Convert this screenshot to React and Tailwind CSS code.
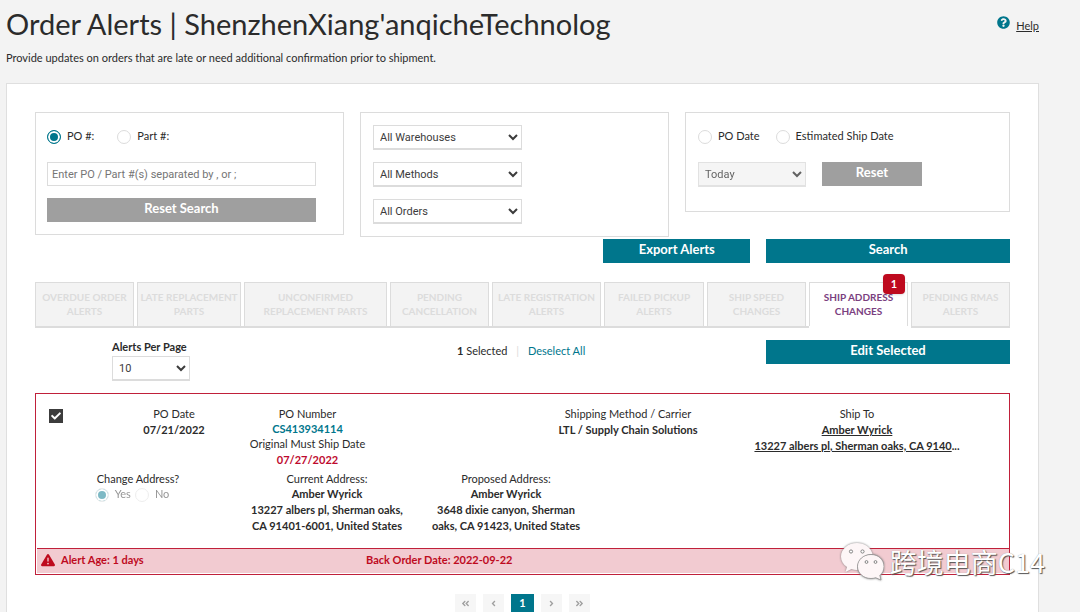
import { useState } from 'react';
import { FaAngleDoubleLeft, FaAngleDoubleRight, FaAngleLeft, FaAngleRight, FaCheck, FaQuestionCircle } from 'react-icons/fa';
import { FaTriangleExclamation } from 'react-icons/fa6';

const tabs = [
    { name: 'OVERDUE ORDER ALERTS' },
    { name: 'LATE REPLACEMENT PARTS' },
    { name: 'UNCONFIRMED REPLACEMENT PARTS' },
    { name: 'PENDING CANCELLATION' },
    { name: 'LATE REGISTRATION ALERTS' },
    { name: 'FAILED PICKUP ALERTS' },
    { name: 'SHIP SPEED CHANGES' },
    { name: 'SHIP ADDRESS CHANGES', count: 1 },
    { name: 'PENDING RMAS ALERTS' },
];

const Radio = ({ label, ...rest }) => (
    <label className="flex items-center gap-1.5">
        <input
            type="radio"
            className="size-[14px] shrink-0 appearance-none rounded-full border border-[#dcdcdc] bg-white checked:border-[#00768c] checked:bg-[#00768c] checked:shadow-[inset_0_0_0_2px_#fff] disabled:border-[#dcdcdc]!"
            {...rest}
        />
        <span className="pb-0.5">{label}</span>
    </label>
);

const Select = ({ options, className = '', ...rest }) => (
    <select
        className={`h-[25px] border border-b-2 border-[#dcdcdc] px-0.5 font-['Roboto',sans-serif] text-[11px] font-normal text-[#3c3c3c] ${className}`}
        {...rest}
    >
        {options.map((option) => <option key={option}>{option}</option>)}
    </select>
);

const Button = ({ children, gray, className = '' }) => (
    <button
        type="button"
        className={`h-6 pb-1 text-center text-[13px] font-bold text-white ${gray ? 'bg-[#9f9f9f]' : 'bg-[#00768c]'} ${className}`}
    >
        {children}
    </button>
);

const Filters = () => {
    const [searchBy, setSearchBy] = useState('po');
    return (
        <form className="grid grid-cols-[309fr_309fr_325fr] items-start gap-x-4">
            <div className="border border-[#dcdcdc] px-[11px] pt-[15px] pb-3">
                <div className="flex gap-[23px]">
                    <Radio name="searchBy" label="PO #:" checked={searchBy === 'po'} onChange={() => setSearchBy('po')} />
                    <Radio name="searchBy" label="Part #:" checked={searchBy === 'part'} onChange={() => setSearchBy('part')} />
                </div>
                <div className="mr-4 mt-4 flex flex-col">
                    <input
                        type="text"
                        aria-label="PO or part numbers"
                        placeholder="Enter PO / Part #(s) separated by , or ;"
                        className="h-6 border border-[#dcdcdc] px-1 font-['Roboto',sans-serif] text-[11px] placeholder:text-[#757575]"
                    />
                    <Button gray className="mt-3">Reset Search</Button>
                </div>
            </div>
            <div className="flex flex-col items-start gap-3 border border-[#dcdcdc] p-3">
                <Select className="w-[149px] bg-white" aria-label="Warehouse" options={['All Warehouses']} />
                <Select className="w-[149px] bg-white" aria-label="Method" options={['All Methods']} />
                <Select className="w-[149px] bg-white" aria-label="Orders" options={['All Orders']} />
            </div>
            <div className="border border-[#dcdcdc] px-3 pt-[15px] pb-6">
                <div className="flex gap-4">
                    <Radio name="dateBy" label="PO Date" />
                    <Radio name="dateBy" label="Estimated Ship Date" />
                </div>
                <div className="mt-4 flex items-start gap-4">
                    <Select className="w-[108px] bg-[#f3f3f3] opacity-80" aria-label="Date range" disabled options={['Today']} />
                    <Button gray className="w-[100px]">Reset</Button>
                </div>
            </div>
        </form>
    );
};

const Tabs = () => (
    <nav className="mt-[19px] grid grid-cols-[102fr_107fr_146fr_102fr_112fr_103fr_102fr_102fr_99fr] text-[10px] font-bold leading-[14px]">
        {tabs.map(({ name, count }) => (
            <div key={name} className={`flex pr-[3px] last:pr-0 ${count ? '' : 'shadow-[inset_0_-2px_#dcdcdc]'}`}>
                <button
                    type="button"
                    className={`relative mb-0.5 h-11 w-full border border-b-0 border-[#dcdcdc] pb-0.5 text-center ${count ? 'bg-white px-2 text-[#7b3f7f]' : 'bg-[#f3f3f3] px-0.5 text-[#dcdcdc]'}`}
                >
                    {name}
                    {count && (
                        <span className="absolute -top-[9px] right-0.5 flex h-5 w-[22px] items-center justify-center rounded-sm bg-[#be0a1e] text-[11px] text-white shadow">{count}</span>
                    )}
                </button>
            </div>
        ))}
    </nav>
);

const AlertCard = () => (
    <article className="mt-3 border border-[#c0203a] text-center">
        <div className="grid grid-cols-[minmax(0,71fr)_minmax(0,134fr)_minmax(0,133fr)_minmax(0,146fr)_minmax(0,216fr)_minmax(0,242fr)_minmax(0,31fr)] pt-3">
            <label className="relative ml-[13px] mt-[3px] flex size-[14px] items-center justify-center">
                <input type="checkbox" defaultChecked aria-label="Select order" className="peer size-[14px] appearance-none border border-[#3c3c3c] checked:bg-[#3c3c3c]" />
                <FaCheck className="pointer-events-none absolute size-[10px] text-white" />
            </label>
            <div>
                <p>PO Date</p>
                <p className="font-bold">07/21/2022</p>
            </div>
            <div>
                <p>PO Number</p>
                <p className="leading-[14px]"><a href="#" className="font-bold text-[#00768c]">CS413934114</a></p>
                <p className="whitespace-nowrap">Original Must Ship Date</p>
                <p className="font-bold text-[#be0a2e]">07/27/2022</p>
            </div>
            <div className="col-start-5">
                <p>Shipping Method / Carrier</p>
                <p className="font-bold">LTL / Supply Chain Solutions</p>
            </div>
            <div>
                <p>Ship To</p>
                <p className="font-bold"><a href="#" className="underline">Amber Wyrick</a></p>
                <p className="whitespace-nowrap font-bold"><a href="#" className="underline">13227 albers pl, Sherman oaks, CA 9140</a>...</p>
            </div>
        </div>
        <div className="mt-[3px] grid grid-cols-[204fr_174fr_184fr_411fr] pb-[14px]">
            <fieldset disabled>
                <legend className="mx-auto leading-[15px]">Change Address?</legend>
                <div className="flex justify-center gap-1 pr-3 opacity-50">
                    <Radio name="change" label="Yes" defaultChecked />
                    <Radio name="change" label="No" />
                </div>
            </fieldset>
            <div className="px-1">
                <p className="leading-[15px]">Current Address:</p>
                <p className="font-bold">Amber Wyrick</p>
                <p className="font-bold">13227 albers pl, Sherman oaks, CA 91401-6001, United States</p>
            </div>
            <div className="px-3">
                <p className="leading-[15px]">Proposed Address:</p>
                <p className="font-bold">Amber Wyrick</p>
                <p className="font-bold">3648 dixie canyon, Sherman oaks, CA 91423, United States</p>
            </div>
        </div>
        <footer className="mb-px ml-px grid grid-cols-[329fr_643fr] border-t border-[#c0203a] bg-[#f2cbd1] pt-[3px] pb-[5px] text-left font-bold text-[#be0a1e]">
            <p className="flex items-center gap-1.5 pl-1"><FaTriangleExclamation className="size-[14px]" /> Alert Age: 1 days</p>
            <p>Back Order Date: 2022-09-22</p>
        </footer>
    </article>
);

const PageButton = ({ label, icon: Icon }) => (
    <button type="button" aria-label={label} className="flex w-[21px] items-center justify-center bg-[#f6f6f6]">
        <Icon className="size-[9px]" />
    </button>
);

const Pagination = () => (
    <nav aria-label="Pages" className="mt-[19px] flex h-[18px] justify-center gap-[7px] text-[#a0a0a0]">
        <PageButton label="First" icon={FaAngleDoubleLeft} />
        <PageButton label="Previous" icon={FaAngleLeft} />
        <button type="button" className="w-[23px] bg-[#00768c] font-bold text-white">1</button>
        <PageButton label="Next" icon={FaAngleRight} />
        <PageButton label="Last" icon={FaAngleDoubleRight} />
    </nav>
);

const Watermark = () => (
    <div className="pointer-events-none absolute right-[35px] top-[542px] flex items-center gap-1.5 text-white">
        <svg viewBox="0 0 44 39" className="h-[39px] w-11 drop-shadow-[0_0_1px_#777]">
            <path fill="#fdf6f7" d="M17 1C8 1 1 7 1 14.500c0 4.500 2.300 8 6 10.500L5.500 30l6-3c2 .7 4 1 6 .9C16 19 23 12 32.500 12 31 5.500 24.500 1 17 1z" />
            <path fill="#fdf6f7" stroke="#888" strokeWidth=".7" d="M31 12.500c-7.500 0-13.500 5.300-13.500 12S23.500 36.500 31 36.500c1.600 0 3.200-.3 4.700-.8L41 38l-1.200-4.500c2.700-2.200 4.200-5.400 4.200-9 0-6.700-5.500-12-13-12z" />
            <g fill="#fff" stroke="#777" strokeWidth=".9">
                <circle cx="11" cy="9.500" r="1.600" />
                <circle cx="22.500" cy="9.500" r="1.600" />
                <circle cx="26.500" cy="20" r="1.400" />
                <circle cx="35.500" cy="20" r="1.400" />
            </g>
        </svg>
        <span className="font-['Noto_Sans_CJK_SC',sans-serif] text-[27px] leading-9 [text-shadow:1px_1px_1px_#555,0_0_1px_#999]">跨境电商C14</span>
    </div>
);

const App = () => {
    return (
        <div className="relative flex min-h-screen flex-col bg-[#f3f3f3] pl-1.5 pr-[41px] font-['Lato',sans-serif] text-[11px] leading-4 text-[#2b2b2b]">
            <header className="flex items-start justify-between pt-1.5 pb-[17px]">
                <div>
                    <h1 className="text-[29px] leading-9">Order Alerts | ShenzhenXiang&apos;anqicheTechnolog</h1>
                    <p className="mt-2">Provide updates on orders that are late or need additional confirmation prior to shipment.</p>
                </div>
                <a href="#" className="mt-2.5 flex gap-1.5">
                    <FaQuestionCircle className="size-[13px] text-[#00768c]" />
                    <span className="mt-0.5 underline">Help</span>
                </a>
            </header>
            <main className="flex-1 border border-b-0 border-[#dfdfdf] bg-white px-7 pt-7">
                <Filters />
                <div className="mt-0.5 flex justify-end gap-4">
                    <Button className="w-[147px]">Export Alerts</Button>
                    <Button className="w-1/4">Search</Button>
                </div>
                <Tabs />
                <div className="mt-3 grid grid-cols-[minmax(0,422fr)_minmax(0,309fr)_minmax(0,244fr)] items-start">
                    <label className="ml-[77px] flex w-[78px] flex-col whitespace-nowrap font-bold">
                        <span className="-mt-px pb-px">Alerts Per Page</span>
                        <Select className="w-[78px] bg-white" options={['10']} />
                    </label>
                    <p className="mt-[3px]">
                        <b>1</b> Selected <span className="mx-1.5 text-[#dcdcdc]">|</span> <a href="#" className="text-[#00768c]">Deselect All</a>
                    </p>
                    <Button>Edit Selected</Button>
                </div>
                <AlertCard />
                <Pagination />
            </main>
            <Watermark />
        </div>
    );
};

export default App;
